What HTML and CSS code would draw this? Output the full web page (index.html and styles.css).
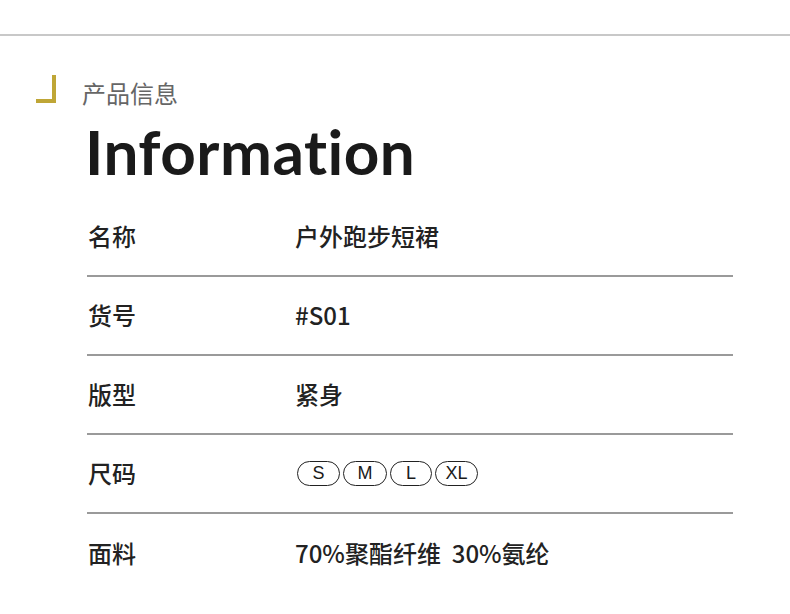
FILE: index.html
```html
<!DOCTYPE html>
<html lang="zh">
<head>
<meta charset="utf-8">
<link rel="stylesheet" href="styles.css">
</head>
<body>
<div class="topline"></div>
<section class="info">
  <div class="subhead">
    <span class="bracket"></span>
    <span class="subtitle">产品信息</span>
  </div>
  <h1 class="title">Information</h1>
  <div class="table">
    <div class="row"><span class="label">名称</span><span class="value">户外跑步短裙</span></div>
    <div class="row"><span class="label">货号</span><span class="value">#S01</span></div>
    <div class="row"><span class="label">版型</span><span class="value">紧身</span></div>
    <div class="row"><span class="label">尺码</span><span class="value sizes"><span class="pill">S</span><span class="pill">M</span><span class="pill">L</span><span class="pill">XL</span></span></div>
    <div class="row last"><span class="label">面料</span><span class="value">70%聚酯纤维&nbsp;&nbsp;30%氨纶</span></div>
  </div>
</section>
</body>
</html>
```
FILE: styles.css
```css
html, body {
  margin: 0;
  padding: 0;
  background: #ffffff;
}
body {
  width: 790px;
  height: 614px;
  overflow: hidden;
  font-family: "Noto Sans CJK SC", "Noto Sans", sans-serif;
  color: #222;
}
.topline {
  margin-top: 34px;
  height: 2px;
  background: #c8c8c8;
}
.info {
  padding-left: 36px;
}
.subhead {
  display: flex;
  align-items: flex-start;
  margin-top: 39px;
  height: 28px;
}
.bracket {
  width: 16px;
  height: 24px;
  border-right: 4px solid #bfa636;
  border-bottom: 4px solid #bfa636;
  flex: none;
}
.subtitle {
  margin-left: 26px;
  margin-top: 4px;
  font-size: 24px;
  line-height: 28px;
  color: #666;
  font-weight: 400;
}
.title {
  margin: 17px 0 0 49px;
  font-family: "Lato", sans-serif;
  font-weight: 700;
  font-size: 62px;
  line-height: 62px;
  letter-spacing: 0.5px;
  color: #1a1a1a;
}
.table {
  margin: 16px 0 0 51px;
  width: 646px;
}
.row {
  display: flex;
  align-items: center;
  box-sizing: border-box;
  height: 79px;
  padding-bottom: 3px;
  border-bottom: 2px solid #9a9a9a;
}
.row.last {
  border-bottom: none;
}
.label {
  width: 207px;
  padding-left: 1px;
  font-size: 24px;
  font-weight: 500;
  color: #222;
}
.value {
  font-size: 24px;
  font-weight: 500;
  color: #222;
}
.sizes {
  display: flex;
  gap: 3px;
  padding-left: 2px;
  padding-top: 3px;
}
.pill {
  box-sizing: border-box;
  width: 43px;
  height: 25px;
  border: 1.5px solid #222;
  border-radius: 13px;
  display: flex;
  align-items: center;
  justify-content: center;
  font-family: "Liberation Sans", Arial, sans-serif;
  font-size: 18px;
  font-weight: 400;
  color: #1a1a1a;
}
.pill:nth-child(2) { width: 44px; }
.pill:nth-child(3) { width: 42px; }
```
